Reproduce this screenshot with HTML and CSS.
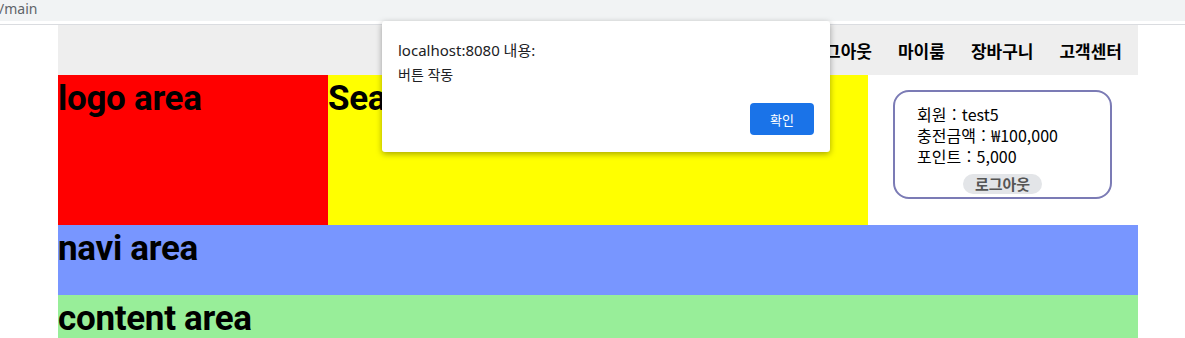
FILE: index.html
```html
<!DOCTYPE html>
<html lang="ko">
<head>
    <meta charset="UTF-8">
    <title>main</title>
    <link rel="stylesheet" href="styles.css">
</head>
<body>

    <div class="browser-bar">
        <span class="url">/main</span>
    </div>

    <div class="wrap">
        <div class="top-menu">
            <a href="#">로그아웃</a>
            <a href="#">마이룸</a>
            <a href="#">장바구니</a>
            <a href="#">고객센터</a>
        </div>

        <div class="header">
            <div class="logo"><h1>logo area</h1></div>
            <div class="search"><h1>Search area</h1></div>
            <div class="login">
                <div class="login-box">
                    <p>회원 : test5</p>
                    <p>충전금액 : ₩100,000</p>
                    <p>포인트 : 5,000</p>
                    <div class="btn-row">
                        <button class="logout">로그아웃</button>
                    </div>
                </div>
            </div>
        </div>

        <div class="navi"><h1>navi area</h1></div>
        <div class="content"><h1>content area</h1></div>
    </div>

    <!-- alert("버튼 작동") -->
    <div class="alert">
        <div class="alert-title">localhost:8080 내용:</div>
        <div class="alert-msg">버튼 작동</div>
        <div class="alert-foot">
            <button class="alert-ok">확인</button>
        </div>
    </div>

</body>
</html>
```

FILE: styles.css
```css
body {
    margin: 0;
    font-family: "Noto Sans", "Noto Sans CJK KR", sans-serif;
    color: #000;
    overflow: hidden;
}

.browser-bar {
    height: 21px;
    background-color: #f1f3f4;
    border-bottom: 3px solid #fff;
    box-shadow: 0 1px 0 #dadce0;
    margin-bottom: 1px;
}

.browser-bar .url {
    display: block;
    margin-left: -1px;
    font-size: 14px;
    line-height: 17px;
    color: #5f6368;
}

.wrap {
    width: 1080px;
    margin-left: 58px;
}

h1 {
    margin: 0;
    font-family: Roboto, "Noto Sans", sans-serif;
    font-size: 35px;
    font-weight: bold;
    line-height: 48px;
    letter-spacing: -0.3px;
}

/* top menu */
.top-menu {
    height: 50px;
    background-color: #eee;
    display: flex;
    justify-content: flex-end;
    align-items: center;
    gap: 26px;
    padding-right: 16px;
}

.top-menu a {
    font-family: "Noto Sans CJK KR", sans-serif;
    font-size: 17px;
    font-weight: bold;
    color: #000;
    text-decoration: none;
}

/* header */
.header {
    display: flex;
    height: 150px;
}

.logo {
    width: 270px;
    background-color: red;
}

.search {
    width: 540px;
    background-color: yellow;
}

.login {
    width: 270px;
    background-color: #fff;
    padding-top: 15px;
    box-sizing: border-box;
}

.login-box {
    width: 219px;
    margin-left: 25px;
    box-sizing: border-box;
    border: 2px solid #7b7bb5;
    border-radius: 16px;
    padding: 12px 0 3px 22px;
    font-family: "Noto Sans CJK KR", sans-serif;
    font-size: 16px;
}

.login-box p {
    margin: 0;
    line-height: 21px;
    word-spacing: 1px;
}

.btn-row {
    display: flex;
    justify-content: center;
    padding-right: 22px;
    margin-top: 7px;
}

.logout {
    border: none;
    background-color: #e3e5e8;
    border-radius: 10px;
    height: 20px;
    padding: 0 12px;
    font-family: "Noto Sans CJK KR", sans-serif;
    font-size: 15px;
    font-weight: bold;
    color: #555;
    line-height: 20px;
}

.navi {
    height: 70px;
    background-color: #7896ff;
}

.content {
    height: 80px;
    background-color: #98ee99;
}

/* alert dialog */
.alert {
    position: absolute;
    left: 382px;
    top: 21px;
    width: 448px;
    height: 131px;
    box-sizing: border-box;
    background-color: #fff;
    border-radius: 3px;
    box-shadow: 0 2px 6px rgba(0, 0, 0, 0.35);
    padding: 16px 16px 0 16px;
    font-family: "Noto Sans", "Noto Sans CJK KR", sans-serif;
    color: #202124;
}

.alert-title {
    font-size: 15px;
    line-height: 24px;
    margin-top: 1px;
}

.alert-msg {
    font-size: 14px;
    line-height: 20px;
    margin-top: 3px;
}

.alert-foot {
    display: flex;
    justify-content: flex-end;
    margin-top: 18px;
}

.alert-ok {
    width: 64px;
    height: 32px;
    border: none;
    border-radius: 4px;
    background-color: #1a73e8;
    color: #fff;
    font-family: "Noto Sans CJK KR", sans-serif;
    font-size: 13px;
}
```
